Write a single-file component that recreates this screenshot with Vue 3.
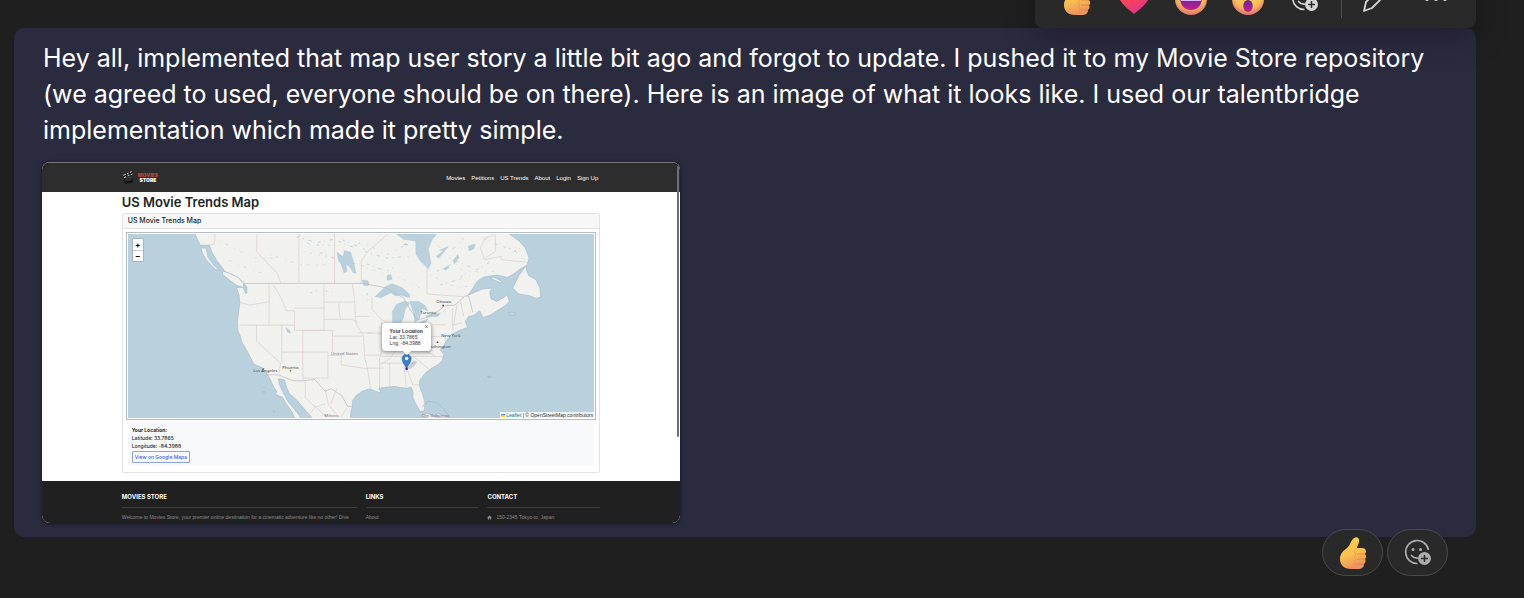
<script setup>
const quickReactions = ['Like', 'Heart', 'Laugh', 'Surprised']
const navLinks = ['Movies', 'Petitions', 'US Trends', 'About', 'Login', 'Sign Up']
</script>

<template>
  <svg class="defs" aria-hidden="true">
    <defs>
      <linearGradient id="skin" x1="0" y1="0" x2="0.3" y2="1">
        <stop offset="0" stop-color="#ffd24a" />
        <stop offset="0.6" stop-color="#fbc04e" />
        <stop offset="1" stop-color="#ee9460" />
      </linearGradient>
      <linearGradient id="rose" x1="0" y1="0" x2="0.6" y2="1">
        <stop offset="0" stop-color="#ff5a5a" />
        <stop offset="0.6" stop-color="#f7405f" />
        <stop offset="1" stop-color="#e0348f" />
      </linearGradient>
      <radialGradient id="face" cx="0.5" cy="0.35" r="0.65">
        <stop offset="0" stop-color="#ffe06a" />
        <stop offset="0.7" stop-color="#fbb850" />
        <stop offset="1" stop-color="#d9707a" />
      </radialGradient>
      <linearGradient id="mouth" x1="0" y1="0" x2="0" y2="1">
        <stop offset="0" stop-color="#6d1fa0" />
        <stop offset="1" stop-color="#c0218e" />
      </linearGradient>
      <symbol id="thumb" viewBox="0 0 32 32">
        <path d="M17 1c3-2 6 0 5 4-.5 3-2 4-2 6h5c4 0 5 4 3 6 1.500 1.500 1.500 4 0 5 1 2 .5 4-1 5 0 4-3 5-6 5h-7C7 32 3 28 3 22c0-5 3-8 7-11 3-2 4-8 7-10z" fill="url(#skin)" />
        <path d="M20 17h8M20 22h7.500M20 27h6.500" stroke="#d0843a" stroke-width="1" fill="none" opacity="0.7" />
        <path d="M20 11c-3 2-3 5-1 6-2 2-1.500 4 0 5-1.500 2-1 4 0 5-1 2 0 4 1 5" stroke="#dd983c" stroke-width="1" fill="none" opacity="0.6" />
      </symbol>
      <symbol id="smile-add" viewBox="0 0 32 32">
        <path d="M26.500 13A11.500 11.500 0 1 0 15.500 26.500" fill="none" stroke="currentColor" stroke-width="1.600" />
        <circle cx="11" cy="12.500" r="1.500" fill="currentColor" />
        <circle cx="18.500" cy="12.500" r="1.500" fill="currentColor" />
        <path d="M9.500 18.500c1.500 2 3.500 2.800 6 2.600" fill="none" stroke="currentColor" stroke-width="1.600" stroke-linecap="round" />
        <circle cx="22.500" cy="21.500" r="6.500" fill="currentColor" />
        <path d="M22.500 18v7M19 21.500h7" stroke="#292929" stroke-width="1.500" />
      </symbol>
    </defs>
  </svg>

  <main class="chat">
    <article class="message">
      <div class="toolbar" role="toolbar" aria-label="Message actions">
        <button v-for="name in quickReactions" :key="name" type="button" class="tool" :aria-label="name">
          <svg v-if="name === 'Like'" class="emoji" viewBox="0 0 32 32"><use href="#thumb" /></svg>
          <svg v-else-if="name === 'Heart'" class="emoji" viewBox="0 0 32 32">
            <path d="M16 31C10 26 0 19 0 10 0 1 12-1 16 7c4-8 16-6 16 3 0 9-10 16-16 21z" fill="url(#rose)" />
          </svg>
          <svg v-else-if="name === 'Laugh'" class="emoji" viewBox="0 0 32 32">
            <circle cx="16" cy="16" r="16" fill="url(#face)" />
            <path d="M5 14h22c0 8-4 13-11 13S5 22 5 14z" fill="url(#mouth)" />
            <path d="M6 14h20v4H6z" fill="#dcb8ff" />
          </svg>
          <svg v-else class="emoji" viewBox="0 0 32 32">
            <circle cx="16" cy="16" r="16" fill="url(#face)" />
            <circle cx="10" cy="11" r="2.500" fill="#4b2250" />
            <circle cx="22" cy="11" r="2.500" fill="#4b2250" />
            <ellipse cx="16" cy="23" rx="4.800" ry="6" fill="url(#mouth)" />
          </svg>
        </button>
        <button type="button" class="tool" aria-label="More reactions">
          <svg class="emoji" viewBox="0 0 32 32"><use href="#smile-add" /></svg>
        </button>
        <span class="divider"></span>
        <button type="button" class="tool wide" aria-label="Edit">
          <svg class="emoji" viewBox="0 0 32 32">
            <path d="M4 28l2-9L21 4a4 4 0 0 1 6 6L12 25z" fill="none" stroke="currentColor" stroke-width="1.800" stroke-linejoin="round" />
          </svg>
        </button>
        <button type="button" class="tool wide" aria-label="More options">
          <svg class="emoji" viewBox="0 0 32 32">
            <circle cx="7" cy="16" r="2" fill="currentColor" />
            <circle cx="16" cy="16" r="2" fill="currentColor" />
            <circle cx="25" cy="16" r="2" fill="currentColor" />
          </svg>
        </button>
      </div>

      <p class="text">
        Hey all, implemented that map user story a little bit ago and forgot to update. I pushed it to my Movie Store repository (we agreed to used, everyone should be on there). Here is an image of what it looks like. I used our talentbridge implementation which made it pretty simple.
      </p>

      <section class="shot" aria-label="US Movie Trends Map">
        <header class="site-header">
          <div class="wrap bar">
            <div class="logo">
              <svg class="clapper" viewBox="0 0 36 42">
                <path d="M2 14L28 2l3 6L6 20z" fill="#161616" />
                <path d="M4 13l7-3M15 9l5-3M24 4l5-2M6 20l6-3M17 14l5-2M26 11l5-2" stroke="#eeeeee" stroke-width="3" />
                <path d="M5 21h28v14L9 39z" fill="#181818" />
                <path d="M6 21h26M10 27h18" stroke="#5a5a5a" stroke-width="2" />
              </svg>
              <span class="brand"><span class="brand-red">MOVIES</span><span>STORE</span></span>
            </div>
            <nav class="nav"><a v-for="l in navLinks" :key="l" href="#">{{ l }}</a></nav>
          </div>
        </header>

        <div class="wrap content">
          <h1>US Movie Trends Map</h1>
          <div class="card">
            <h2>US Movie Trends Map</h2>
            <div class="card-body">
              <div class="map">
                <svg class="tiles" viewBox="24 28 1398 552" role="img" aria-label="Map of the United States">
                  <rect x="24" y="28" width="1398" height="552" fill="#b8d1dd" />
                  <g fill="#f1f1ed" stroke="#a6bbcd" stroke-width="2" stroke-linejoin="round">
                    <path d="M222 20L232 45 241 62 268 62 275 82 290 108 306 128 315 141 338 150 358 163 371 176 379 190 377 206 369 188 349 188 357 212 359 235 355 265 352 290 353 318 359 330 365 352 379 375 392 400 401 418 425 428 437 440 448 460 460 485 470 501 464 508 487 517 500 540 515 560 528 590 549 590 530 562 505 532 490 505 478 480 475 462 492 465 500 490 507 506 528 524 547 546 585 590 690 590 692 560 696 548 697 528 708 512 725 500 748 492 768 500 783 505 776 490 800 487 825 485 840 488 862 490 872 487 878 500 878 520 888 540 900 560 912 558 914 535 907 508 898 485 898 467 912 448 932 432 955 418 966 408 970 388 960 375 972 360 982 342 995 328 1020 316 1042 308 1035 290 1045 275 1060 272 1078 258 1088 278 1108 272 1130 258 1155 242 1167 230 1160 210 1148 220 1128 230 1112 222 1108 203 1115 190 1085 193 1065 202 1042 212 1055 195 1070 170 1090 157 1130 151 1160 158 1180 148 1200 132 1220 122 1226 100 1215 70 1195 48 1155 20z" />
                    <path d="M243 70l15 0 6 28 17 24 18 16-14-4-26-28-13-22z" />
                    <path d="M306 138l22 8 26 12 16 18 0 12-20-6-22-16-20-16z" />
                    <path d="M1217 123l-22 30-18 37 18 18 32 5 20 8 14-4-2-26-12-26-22-12-6-14z" />
                    <path d="M1108 160l15-1 24 12-8 3z" />
                    <path d="M1149 265l12-3 14 4-12 6z" transform="translate(12 0)" fill="#c6d9e2" />
                    <path d="M1100 454l8 0 5 3-8 2z" fill="#9db4c8" />
                    <path d="M428 500l7 0 0 7-7 0zM460 558l6 2-3 4z" fill="#b8d1dd" />
                    <path d="M902 572l18-6 18 5 14 12-24-2zM946 565l20 6 22 8-30 0z" />
                  </g>
                  <path d="M905 545l18-16 26 4 22 20 16 22" fill="none" stroke="#9db4d0" stroke-width="2" />
                  <g fill="#b8d1dd" stroke="#a3c0d2" stroke-width="1">
                    <path d="M817 20l33 24 36 5 1 38 14 23 23 22 8-16-8-44 12-28 20-24z" />
                    <path d="M764 216l32-31 20-8 30 12 22 20 0 10-28-8-14 3-14-10-28 14z" />
                    <path d="M817 296l-1-35 12-22 26-10 14 6-14 20-5 26-12 22z" />
                    <path d="M868 230l28 0 18 12 9 17-18-8-8 32-13 10-5-32z" />
                    <path d="M873 307l25-14 26-11-16 18-24 12zM917 274l16-6 27-3-8 10-31 2z" />
                    <path d="M650 82l18 14 5-18 18 4 10 34 6 30-8-2-12-20-10-4 4 20-10 4-8-26-8-10z" />
                    <path d="M725 166l18 2 4 14-16 0zM800 153l12-3 3 14-14 3zM497 308l10 8 4 8-8 0z" />
                    <path d="M948 95l22-17-12-1 26-12-16 20-13 16zM998 108l14-18 4 8-14 20zM1044 64l20-6-3 14-15 6zM970 132l12-8 4 5-12 8zM850 60l8-4 5 5z" />
                    <path d="M375 180l6 10 0 16-4-2z" />
                  </g>
                  <g fill="none" stroke="#a9c8d8" stroke-width="2" stroke-dasharray="7 11 3 15 10 19">
                    <path d="M530 37l60 17 50-10 60 24 28-20M600 84l50 20 80 20M668 46l70 30M570 205l20-8M615 198l30 5M535 30l35 30 60 2M740 205l5 30" />
                    <path d="M735 80l60 20 70-5M740 118l60 22 30-20M950 140l60-30 60 25 50-30M960 180l50-14 30-24M1090 40l40 20 50 15 30 30M1030 40l-40 40M1180 80l30-14" />
                  </g>
                  <g fill="none" stroke="#cfcfd0" stroke-width="2" stroke-dasharray="3 15 8 22">
                    <path d="M300 50l100 50 60 0M310 100l70 30 60 20M450 90l90 30 90 0M550 80l80 20M740 60l60 30 60-30M740 130l100 30 60 30M940 50l90 90 90 0M930 150l80 40 60-10M1000 170l60-20" />
                  </g>
                  <g fill="none" stroke="#d9cbd2" stroke-width="2">
                    <path d="M285 28l-2 30-15 2M410 28v54l62 64 10 29M536 28v147M643 28v147M723 175v-65l20-30 60-52" />
                    <path d="M358 233l30 8 58-10M447 175v123M358 301h165M409 301v48l72 66-4 28M485 301v112M460 180l28 50 10 28 25 0v59h88V175M523 250h88M611 232h89M611 284l85 0 16 9M548 317v150M485 382h138M548 317h89v65M637 334h89M623 382v78h-75M623 392h40v28l78 12M696 175l8 60 2 60 24 40 3 60 8 35 10 60M706 275h42M712 324h45M733 391h50M655 235l5 49" />
                    <path d="M920 28v180l110 8M1095 40l-15 30 12 35 50-10 0 10 85 8M1095 40l30-10 0 50-30 20" />
                    <path d="M755 215l0 40 30 30 35 18M740 325h45M783 290l10 60-15 50 0 90M740 430h50M783 395h190M783 415h100M830 300l0 70-20 30-30 20M850 300v60M890 310v45l-40 30M892 335h80M930 300h45M850 415l8 70M808 415v70M848 400l30 80 20 0M880 395l60 50M897 370l50 25M975 325v35M998 300v20M996 250v50l30-5M1010 240l-10 60M1020 230l10 45" />
                    <path d="M555 467v50l30 30 30-10M585 547l-20 25M615 495l10 45 30 35M650 490l-20 50M660 580l20-30M580 540l40 38" />
                  </g>
                  <g fill="none" stroke="#bfb3bc" stroke-width="2">
                    <path d="M371 176h354l35 6 40 8 50 30 20 35 20 30 25-5 35-18 25-20h28l30-28 12 0 12 48" />
                    <path d="M437 450l38 0 45 18h32l32-4 30 35 20-7 30 20 18 32 16 2" />
                  </g>
                  <g class="label">
                    <text x="399" y="443">Los Angeles</text>
                    <text x="486" y="433">Phoenix</text>
                    <text x="632" y="390" class="country">United States</text>
                    <text x="948" y="235">Ottawa</text>
                    <text x="900" y="269">Toronto</text>
                    <text x="963" y="336">New York</text>
                    <text x="918" y="369">Washington</text>
                    <text x="904" y="575" class="country">The Bahamas</text>
                    <text x="612" y="575" class="country">México</text>
                    <path d="M966 240h5v5h-5zM949 350h5v5h-5zM509 436h4v4h-4zM428 430h4v4h-4z" fill="#555555" />
                  </g>
                  <path d="M859 432l22-26 10 6-18 20z" fill="#777777" opacity="0.3" />
                  <path d="M859 434C855 420 845 414 845 401a14 13 0 0 1 28 0c0 13-10 19-14 33z" fill="#3c7fc9" stroke="#2c66a8" stroke-width="1" />
                  <circle cx="859" cy="401" r="5" fill="#ffffff" />
                  <circle cx="859" cy="432" r="4" fill="#2b2bc0" />
                </svg>
                <div class="zoom">
                  <button type="button" aria-label="Zoom in">+</button>
                  <button type="button" aria-label="Zoom out">−</button>
                </div>
                <div class="popup">
                  <button type="button" class="close" aria-label="Close popup">×</button>
                  <strong>Your Location</strong>
                  <span>Lat: 33.7865</span>
                  <span>Lng: -84.3988</span>
                </div>
                <div class="credit">
                  <svg class="flag" viewBox="0 0 12 8"><path d="M0 0h12v4H0z" fill="#4c7be1" /><path d="M0 4h12v4H0z" fill="#ffd500" /></svg>
                  <span><a href="#">Leaflet</a> | © OpenStreetMap contributors</span>
                </div>
              </div>
              <div class="info">
                <strong>Your Location:</strong>
                <span>Latitude: 33.7865</span>
                <span>Longitude: -84.3988</span>
                <a class="gmaps" href="#">View on Google Maps</a>
              </div>
            </div>
          </div>
        </div>

        <footer class="site-footer">
          <div class="wrap columns">
            <div><h3>MOVIES STORE</h3><p>Welcome to Movies Store, your premier online destination for a cinematic adventure like no other! Dive</p></div>
            <div><h3>LINKS</h3><p>About</p></div>
            <div>
              <h3>CONTACT</h3>
              <p><svg class="home" viewBox="0 0 12 12"><path d="M6 1L0 6h2v5h3V8h2v3h3V6h2z" fill="currentColor" /></svg>150-2345 Tokyo-to, Japan</p>
            </div>
          </div>
        </footer>
        <span class="scrollbar"></span>
      </section>
    </article>

    <div class="reactions">
      <button type="button" class="pill" aria-label="Like"><svg viewBox="0 0 32 32"><use href="#thumb" /></svg></button>
      <button type="button" class="pill" aria-label="Add reaction"><svg viewBox="0 0 32 32"><use href="#smile-add" /></svg></button>
    </div>
  </main>
</template>

<style>
html, body { background: #1f1f1f; }
body { margin: 0; overflow: hidden; }
</style>

<style scoped>
* { box-sizing: border-box; }
button { border: 0; padding: 0; background: none; font: inherit; color: inherit; cursor: pointer; }
a { color: inherit; text-decoration: none; }
h1, h2, h3, p { margin: 0; }
.defs { position: absolute; width: 0; height: 0; }
.chat {
  min-height: 100vh;
  padding: 28px 48px 0 14px;
  background: #1f1f1f;
  color: #ffffff;
  font-family: Inter, "Liberation Sans", sans-serif;
}
.message {
  position: relative;
  padding: 12px 28px 14px;
  border-radius: 10px;
  background: #2b2b40;
}
.toolbar {
  position: absolute;
  right: 0;
  bottom: 100%;
  display: flex;
  align-items: center;
  height: 58px;
  padding: 0 10px 0 13px;
  border-radius: 8px;
  background: #292929;
  color: #d6d6d6;
  box-shadow: 0 8px 32px rgba(0, 0, 0, 0.3);
}
.tool { display: flex; justify-content: center; width: 57px; }
.wide { width: 60px; }
.emoji { width: 32px; height: 32px; }
.divider { width: 1px; height: 38px; margin: 0 4px 0 8px; background: #4d4d4d; }
.text { padding-left: 1px; font-size: 25px; line-height: 36px; }

.shot {
  position: relative;
  max-width: 638px;
  margin-top: 14px;
  overflow: hidden;
  border-radius: 8px;
  background: #ffffff;
  color: #212529;
  font-size: 5px;
  line-height: 8px;
  box-shadow: 0 1px 4px rgba(0, 0, 0, 0.5);
}
.wrap { width: 75%; margin: 0 auto; }
.site-header { border-top: 1px solid #777777; background: #2d2d2d; color: #ffffff; }
.bar { display: flex; align-items: center; justify-content: space-between; height: 29px; }
.logo { display: flex; align-items: center; gap: 4px; }
.clapper { width: 12px; height: 14px; }
.brand { display: flex; flex-direction: column; align-items: center; font-size: 5px; font-weight: 900; line-height: 5px; }
.brand-red { color: #b8463c; }
.nav { display: flex; gap: 6px; padding-right: 2px; font-family: "Liberation Sans", sans-serif; font-size: 6px; }
h1 { font-size: 13px; line-height: 20px; font-weight: 600; }
.card { margin-top: 1px; border: 1px solid #e3e3e3; border-radius: 2px; }
h2 { padding: 0 5px; border-bottom: 1px solid #e3e3e3; background: #f7f7f7; font-size: 7px; line-height: 14px; font-weight: 500; }
.card-body { padding: 3px 3px 6px; }
.map { position: relative; padding: 1px; border: 1px solid #b5bcc4; }
.tiles { display: block; width: 100%; }
.label { font-family: "Noto Sans", sans-serif; font-size: 13px; fill: #444444; }
.country { fill: #81718a; }
.zoom {
  position: absolute;
  top: 5px;
  left: 5px;
  display: flex;
  flex-direction: column;
  border: 1px solid #a8b4bb;
  border-radius: 1px;
  background: #ffffff;
}
.zoom button { width: 10px; height: 11px; font-size: 8px; line-height: 10px; font-weight: 700; color: #000000; }
.zoom button + button { border-top: 1px solid #cccccc; }
.popup {
  position: absolute;
  left: 54.400%;
  top: 48.500%;
  display: flex;
  flex-direction: column;
  width: 49px;
  padding: 5px 0 5px 8px;
  border-radius: 4px;
  background: #ffffff;
  font-family: "Liberation Sans", sans-serif;
  font-size: 5px;
  line-height: 6px;
  color: #333333;
  box-shadow: 0 1px 4px rgba(0, 0, 0, 0.5);
}
.popup::after {
  content: "";
  position: absolute;
  top: 100%;
  left: 21px;
  border: 4px solid transparent;
  border-top-color: #ffffff;
  border-bottom-width: 0;
}
.close { position: absolute; top: 1px; right: 2px; font-size: 7px; color: #757575; }
.credit {
  position: absolute;
  right: 1px;
  bottom: 1px;
  display: flex;
  align-items: center;
  gap: 1px;
  padding: 0 1px;
  background: #f1f6f8;
  font-family: "Liberation Sans", sans-serif;
  font-size: 5px;
  line-height: 6px;
  color: #333333;
}
.credit a { color: #0078a8; }
.flag { width: 4px; height: 3px; }
.info {
  display: flex;
  flex-direction: column;
  align-items: flex-start;
  margin: 0 2px;
  padding: 6px 4px 3px;
  background: #f8f9fa;
  font-weight: 500;
}
.info strong { font-weight: 700; }
.gmaps { margin-top: 1px; padding: 0 2px; border: 1px solid #8ba2f2; border-radius: 1px; line-height: 10px; color: #4263eb; }
.site-footer { height: 42px; margin-top: 8px; overflow: hidden; background: #202020; }
.columns { display: grid; grid-template-columns: minmax(0, 25fr) minmax(0, 12fr) minmax(0, 12fr); gap: 9px; padding-top: 6px; }
h3 { padding: 5px 0; border-bottom: 1px solid #3c3c3c; font-size: 6px; line-height: 10px; font-weight: 700; color: #ffffff; }
.site-footer p { display: flex; align-items: center; gap: 4px; margin-top: 5px; color: #8a8a8a; font-family: "Liberation Sans", sans-serif; white-space: nowrap; }
.home { width: 5px; height: 5px; }
.scrollbar { position: absolute; top: 4px; right: 1px; width: 2px; height: 271px; border-radius: 1px; background: #6f6f6f; }

.reactions { position: relative; display: flex; justify-content: flex-end; gap: 4px; margin: -8px 28px 0 0; }
.pill {
  display: flex;
  align-items: center;
  justify-content: center;
  width: 61px;
  height: 47px;
  border: 1px solid #4a4a4a;
  border-radius: 24px;
  background: #292929;
  color: #adadad;
}
.pill svg { width: 32px; height: 32px; }
</style>
